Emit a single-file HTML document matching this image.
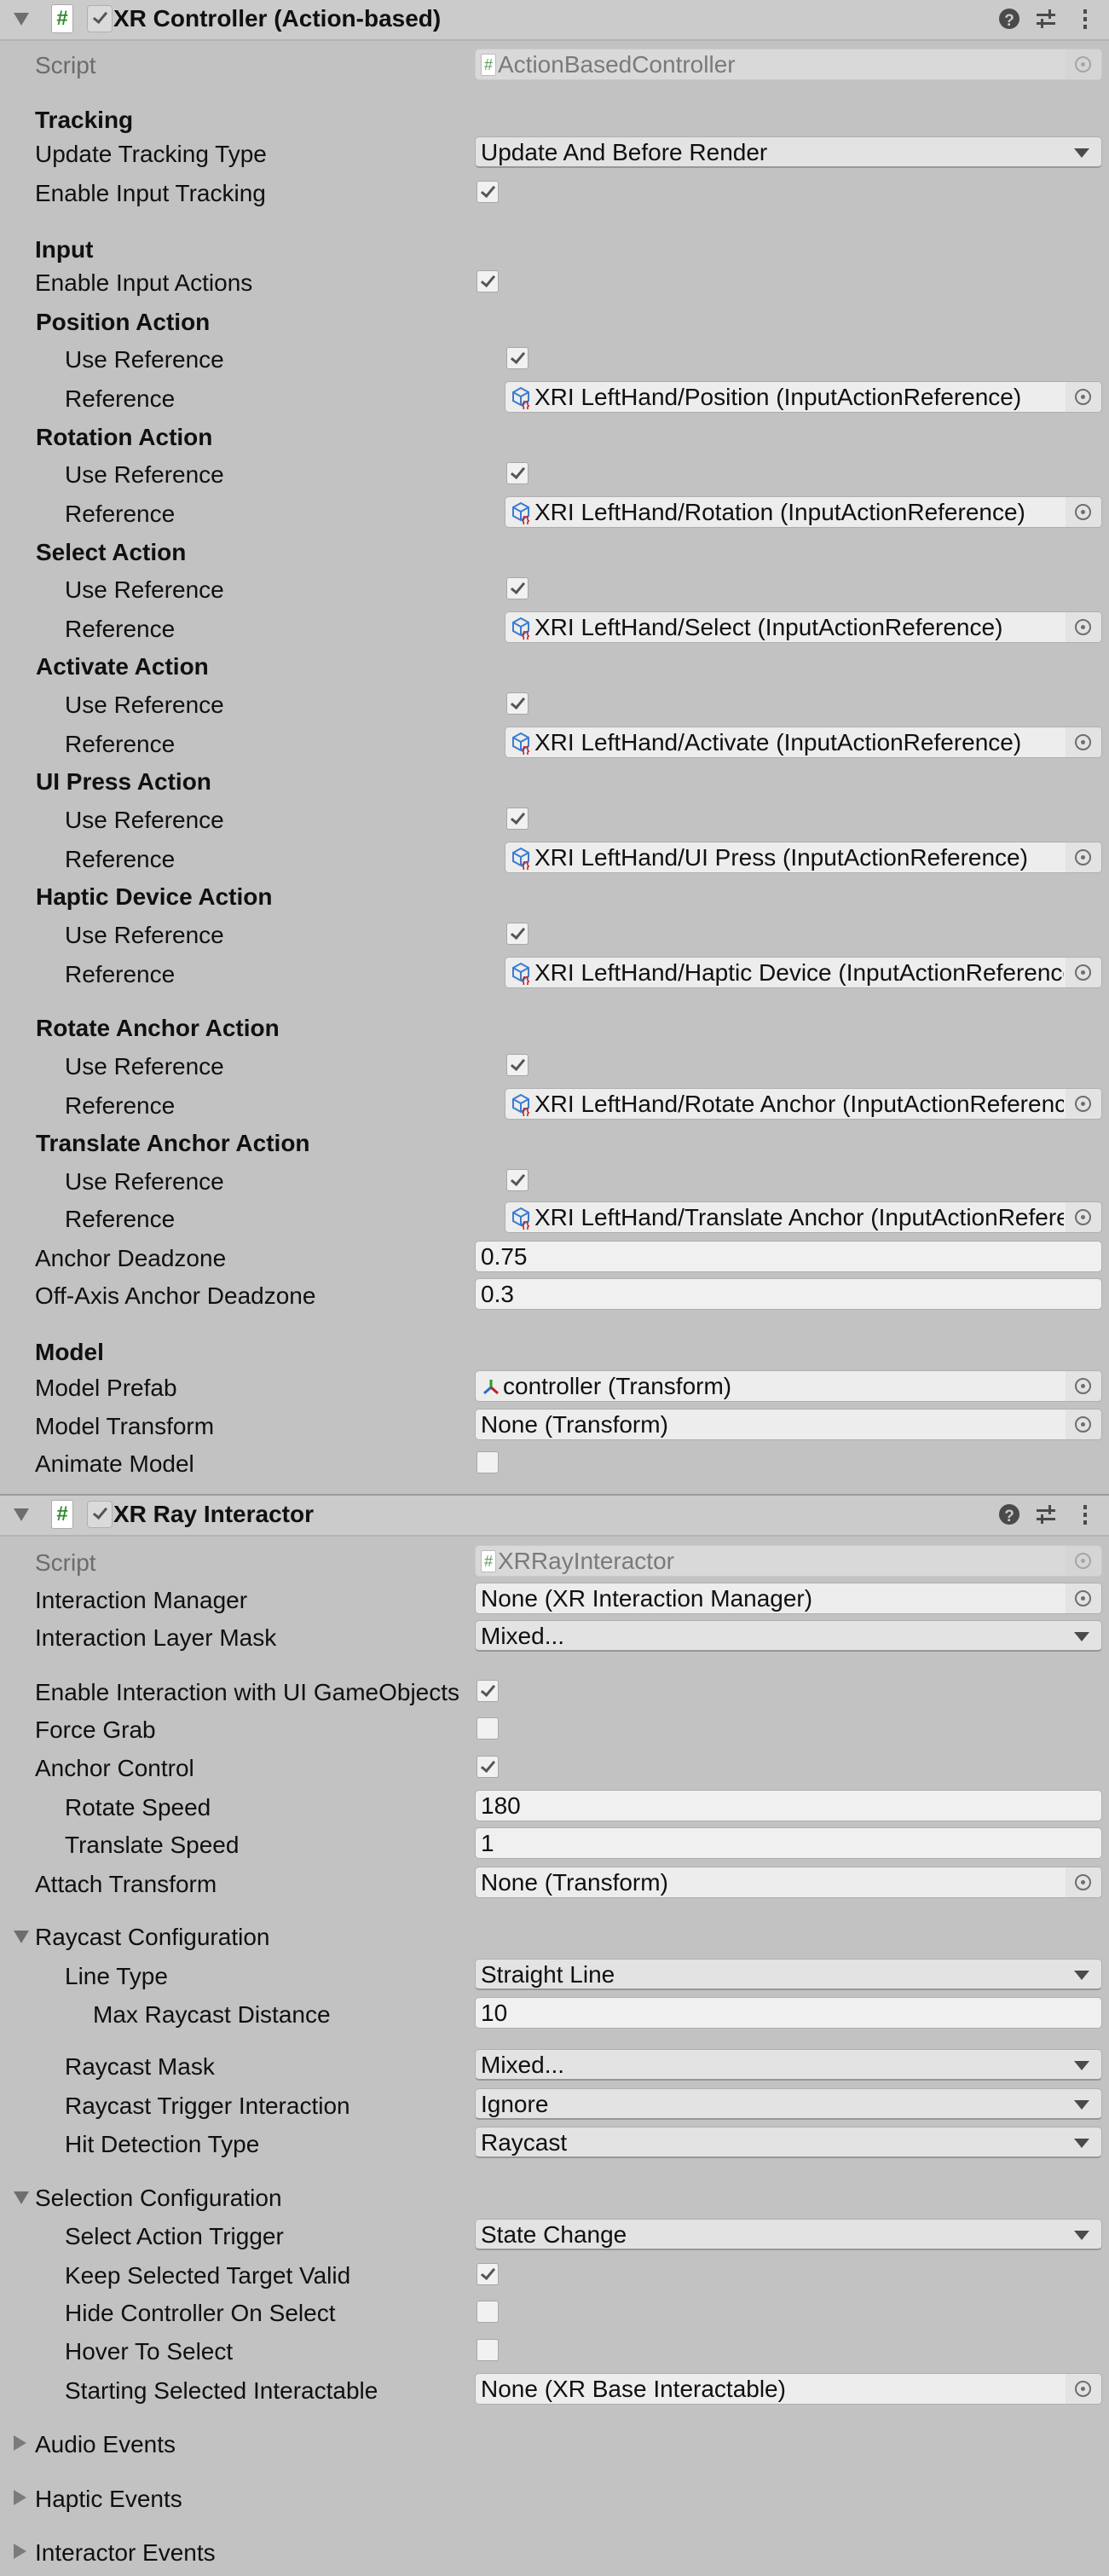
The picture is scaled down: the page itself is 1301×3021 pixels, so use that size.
<!DOCTYPE html>
<html><head><meta charset="utf-8">
<style>
html,body{margin:0;padding:0}
body{width:1301px;height:3021px;background:#c2c2c2;position:relative;overflow:hidden;font-family:"Liberation Sans",sans-serif;color:#101010}
.l{position:absolute;font-size:28px;line-height:40px;white-space:nowrap;margin-top:2px}
.b{font-weight:bold}
.g{color:#6c6c6c}
.hd{position:absolute;left:0;width:1301px;height:46px;background:#cbcbcb;border-bottom:2px solid #b3b3b3}
.f{position:absolute;left:557px;width:736px;height:37px;box-sizing:border-box;border:1px solid #afafaf;border-radius:5px;background:#ededed;font-size:28px;line-height:36px;padding-left:6px;white-space:nowrap;overflow:hidden}
.f.r{left:592px;width:701px}
.dd{background:#e3e3e3;border-bottom:2px solid #979797}
.tf{background:#f0f0f0}
.dis{background:#d9d9d9;border-color:#c9c9c9;color:#7a7a7a}
.arr{position:absolute;right:14px;top:13px;width:0;height:0;border-left:9px solid transparent;border-right:9px solid transparent;border-top:11px solid #4a4a4a}
.pk{position:absolute;right:0;top:0;width:42px;height:100%;background:#e3e3e3}
.pk:after{content:"";position:absolute;left:11px;top:8px;width:15px;height:15px;border:2px solid #6e6e6e;border-radius:50%}
.pk:before{content:"";position:absolute;left:18px;top:15px;width:5px;height:5px;background:#6e6e6e;border-radius:50%;z-index:2}
.dis .pk{background:#d5d5d5}.dis .pk:after{border-color:#a5a5a5}.dis .pk:before{background:#a5a5a5}
.txt{position:relative;z-index:1;overflow:hidden;margin-right:44px}
.c{position:absolute;left:559px;width:26px;height:26px;box-sizing:border-box;background:#f1f1f1;border:1px solid #a7a7a7;border-radius:3px}
.c.k:after{content:"";position:absolute;left:8px;top:2px;width:6px;height:13px;border-right:3px solid #555;border-bottom:3px solid #555;transform:rotate(40deg)}
.tri{position:absolute;left:16px;width:0;height:0;border-left:9px solid transparent;border-right:9px solid transparent;border-top:15px solid #6e6e6e}
.trr{position:absolute;left:16px;width:0;height:0;border-top:9px solid transparent;border-bottom:9px solid transparent;border-left:15px solid #7b7b7b}
.hash{position:absolute;width:26px;height:34px;background:#fff;border:1px solid #aaa;border-radius:3px;box-sizing:border-box;color:#2f8a2f;font-weight:bold;font-size:24px;line-height:32px;text-align:center}
.hc{position:absolute;left:102px;width:30px;height:32px;box-sizing:border-box;background:#dadada;border:1px solid #b0b0b0;border-radius:4px}
.hc:after{content:"";position:absolute;left:10px;top:4px;width:6px;height:13px;border-right:3px solid #555;border-bottom:3px solid #555;transform:rotate(40deg)}
.ti{position:absolute;left:133px;font-size:28px;font-weight:bold;line-height:40px}
.sh{display:inline-block;width:18px;height:26px;background:#fff;border:1px solid #bbb;border-radius:2px;color:#5a9a5a;font-size:18px;line-height:24px;text-align:center;vertical-align:middle;margin:-4px 2px 0 0;box-sizing:border-box}
.ic{display:inline-block;vertical-align:-5px;margin-right:2px}
</style></head><body>

<div class="hd" style="top:0"></div>
<div class="tri" style="top:15px"></div>
<div class="hash" style="left:60px;top:5px">#</div>
<div class="hc" style="top:6px"></div>
<div class="ti" style="top:2px">XR Controller (Action-based)</div>
<svg style="position:absolute;left:1170px;top:8px" width="120" height="30" viewBox="0 0 120 30">
<circle cx="14" cy="14" r="12" fill="#4a4a4a"/><text x="14" y="22" font-family="Liberation Sans" font-weight="bold" font-size="19" fill="#cbcbcb" text-anchor="middle">?</text>
<g fill="#4a4a4a"><rect x="46" y="8" width="22" height="3"/><rect x="60" y="3" width="3" height="11"/><rect x="46" y="18" width="22" height="3"/><rect x="51" y="14" width="3" height="11"/></g>
<g fill="#4a4a4a"><rect x="101" y="3" width="4" height="5"/><rect x="101" y="12" width="4" height="5"/><rect x="101" y="21" width="4" height="5"/></g>
</svg>

<div class="l g" style="left:41px;top:55px">Script</div>
<div class="f dis" style="top:57px"><div class="txt"><span class="sh">#</span>ActionBasedController</div><div class="pk"></div></div>

<div class="l b" style="left:41px;top:119px">Tracking</div>
<div class="l" style="left:41px;top:159px">Update Tracking Type</div>
<div class="f dd" style="top:160px">Update And Before Render<div class="arr"></div></div>
<div class="l" style="left:41px;top:205px">Enable Input Tracking</div>
<div class="c k" style="top:212px"></div>

<div class="l b" style="left:41px;top:271px">Input</div>
<div class="l" style="left:41px;top:310px">Enable Input Actions</div>
<div class="c k" style="top:317px"></div>

<div class="l b" style="left:42px;top:356px">Position Action</div>
<div class="l" style="left:76px;top:400px">Use Reference</div><div class="c k" style="left:594px;top:407px"></div>
<div class="l" style="left:76px;top:446px">Reference</div>
<div class="f r" style="top:447px"><div class="txt"><svg class="ic" width="26" height="28" viewBox="0 0 26 28"><path d="M12 3 L21 8 L21 18 L12 23 L3 18 L3 8 Z M3 8 L12 13 L21 8 M12 13 L12 23" fill="none" stroke="#3a7cd0" stroke-width="2"/><text x="13" y="27" font-size="12" font-family="Liberation Sans" fill="#c02020" font-weight="bold">{}</text></svg>XRI LeftHand/Position (InputActionReference)</div><div class="pk"></div></div>

<div class="l b" style="left:42px;top:491px">Rotation Action</div>
<div class="l" style="left:76px;top:535px">Use Reference</div><div class="c k" style="left:594px;top:542px"></div>
<div class="l" style="left:76px;top:581px">Reference</div>
<div class="f r" style="top:582px"><div class="txt"><svg class="ic" width="26" height="28" viewBox="0 0 26 28"><path d="M12 3 L21 8 L21 18 L12 23 L3 18 L3 8 Z M3 8 L12 13 L21 8 M12 13 L12 23" fill="none" stroke="#3a7cd0" stroke-width="2"/><text x="13" y="27" font-size="12" font-family="Liberation Sans" fill="#c02020" font-weight="bold">{}</text></svg>XRI LeftHand/Rotation (InputActionReference)</div><div class="pk"></div></div>

<div class="l b" style="left:42px;top:626px">Select Action</div>
<div class="l" style="left:76px;top:670px">Use Reference</div><div class="c k" style="left:594px;top:677px"></div>
<div class="l" style="left:76px;top:716px">Reference</div>
<div class="f r" style="top:717px"><div class="txt"><svg class="ic" width="26" height="28" viewBox="0 0 26 28"><path d="M12 3 L21 8 L21 18 L12 23 L3 18 L3 8 Z M3 8 L12 13 L21 8 M12 13 L12 23" fill="none" stroke="#3a7cd0" stroke-width="2"/><text x="13" y="27" font-size="12" font-family="Liberation Sans" fill="#c02020" font-weight="bold">{}</text></svg>XRI LeftHand/Select (InputActionReference)</div><div class="pk"></div></div>

<div class="l b" style="left:42px;top:760px">Activate Action</div>
<div class="l" style="left:76px;top:805px">Use Reference</div><div class="c k" style="left:594px;top:812px"></div>
<div class="l" style="left:76px;top:851px">Reference</div>
<div class="f r" style="top:852px"><div class="txt"><svg class="ic" width="26" height="28" viewBox="0 0 26 28"><path d="M12 3 L21 8 L21 18 L12 23 L3 18 L3 8 Z M3 8 L12 13 L21 8 M12 13 L12 23" fill="none" stroke="#3a7cd0" stroke-width="2"/><text x="13" y="27" font-size="12" font-family="Liberation Sans" fill="#c02020" font-weight="bold">{}</text></svg>XRI LeftHand/Activate (InputActionReference)</div><div class="pk"></div></div>

<div class="l b" style="left:42px;top:895px">UI Press Action</div>
<div class="l" style="left:76px;top:940px">Use Reference</div><div class="c k" style="left:594px;top:947px"></div>
<div class="l" style="left:76px;top:986px">Reference</div>
<div class="f r" style="top:987px"><div class="txt"><svg class="ic" width="26" height="28" viewBox="0 0 26 28"><path d="M12 3 L21 8 L21 18 L12 23 L3 18 L3 8 Z M3 8 L12 13 L21 8 M12 13 L12 23" fill="none" stroke="#3a7cd0" stroke-width="2"/><text x="13" y="27" font-size="12" font-family="Liberation Sans" fill="#c02020" font-weight="bold">{}</text></svg>XRI LeftHand/UI Press (InputActionReference)</div><div class="pk"></div></div>

<div class="l b" style="left:42px;top:1030px">Haptic Device Action</div>
<div class="l" style="left:76px;top:1075px">Use Reference</div><div class="c k" style="left:594px;top:1082px"></div>
<div class="l" style="left:76px;top:1121px">Reference</div>
<div class="f r" style="top:1122px"><div class="txt"><svg class="ic" width="26" height="28" viewBox="0 0 26 28"><path d="M12 3 L21 8 L21 18 L12 23 L3 18 L3 8 Z M3 8 L12 13 L21 8 M12 13 L12 23" fill="none" stroke="#3a7cd0" stroke-width="2"/><text x="13" y="27" font-size="12" font-family="Liberation Sans" fill="#c02020" font-weight="bold">{}</text></svg>XRI LeftHand/Haptic Device (InputActionReference)</div><div class="pk"></div></div>

<div class="l b" style="left:42px;top:1184px">Rotate Anchor Action</div>
<div class="l" style="left:76px;top:1229px">Use Reference</div><div class="c k" style="left:594px;top:1236px"></div>
<div class="l" style="left:76px;top:1275px">Reference</div>
<div class="f r" style="top:1276px"><div class="txt"><svg class="ic" width="26" height="28" viewBox="0 0 26 28"><path d="M12 3 L21 8 L21 18 L12 23 L3 18 L3 8 Z M3 8 L12 13 L21 8 M12 13 L12 23" fill="none" stroke="#3a7cd0" stroke-width="2"/><text x="13" y="27" font-size="12" font-family="Liberation Sans" fill="#c02020" font-weight="bold">{}</text></svg>XRI LeftHand/Rotate Anchor (InputActionReference)</div><div class="pk"></div></div>

<div class="l b" style="left:42px;top:1319px">Translate Anchor Action</div>
<div class="l" style="left:76px;top:1364px">Use Reference</div><div class="c k" style="left:594px;top:1371px"></div>
<div class="l" style="left:76px;top:1408px">Reference</div>
<div class="f r" style="top:1409px"><div class="txt"><svg class="ic" width="26" height="28" viewBox="0 0 26 28"><path d="M12 3 L21 8 L21 18 L12 23 L3 18 L3 8 Z M3 8 L12 13 L21 8 M12 13 L12 23" fill="none" stroke="#3a7cd0" stroke-width="2"/><text x="13" y="27" font-size="12" font-family="Liberation Sans" fill="#c02020" font-weight="bold">{}</text></svg>XRI LeftHand/Translate Anchor (InputActionReference)</div><div class="pk"></div></div>

<div class="l" style="left:41px;top:1454px">Anchor Deadzone</div>
<div class="f tf" style="top:1455px">0.75</div>
<div class="l" style="left:41px;top:1498px">Off-Axis Anchor Deadzone</div>
<div class="f tf" style="top:1499px">0.3</div>

<div class="l b" style="left:41px;top:1564px">Model</div>
<div class="l" style="left:41px;top:1606px">Model Prefab</div>
<div class="f" style="top:1607px"><div class="txt"><svg class="ic" width="24" height="26" viewBox="0 0 24 26"><path d="M12 4 L12 13" stroke="#2a9a2a" stroke-width="3"/><path d="M12 13 L4 20" stroke="#2a6ad0" stroke-width="3"/><path d="M12 13 L20 20" stroke="#c02020" stroke-width="3"/></svg>controller (Transform)</div><div class="pk"></div></div>
<div class="l" style="left:41px;top:1651px">Model Transform</div>
<div class="f" style="top:1652px"><div class="txt">None (Transform)</div><div class="pk"></div></div>
<div class="l" style="left:41px;top:1695px">Animate Model</div>
<div class="c" style="top:1702px"></div>

<div class="hd" style="top:1752px;border-top:2px solid #9a9a9a"></div>
<div class="tri" style="top:1769px"></div>
<div class="hash" style="left:60px;top:1759px">#</div>
<div class="hc" style="top:1760px"></div>
<div class="ti" style="top:1756px">XR Ray Interactor</div>
<svg style="position:absolute;left:1170px;top:1762px" width="120" height="30" viewBox="0 0 120 30">
<circle cx="14" cy="14" r="12" fill="#4a4a4a"/><text x="14" y="22" font-family="Liberation Sans" font-weight="bold" font-size="19" fill="#cbcbcb" text-anchor="middle">?</text>
<g fill="#4a4a4a"><rect x="46" y="8" width="22" height="3"/><rect x="60" y="3" width="3" height="11"/><rect x="46" y="18" width="22" height="3"/><rect x="51" y="14" width="3" height="11"/></g>
<g fill="#4a4a4a"><rect x="101" y="3" width="4" height="5"/><rect x="101" y="12" width="4" height="5"/><rect x="101" y="21" width="4" height="5"/></g>
</svg>

<div class="l g" style="left:41px;top:1811px">Script</div>
<div class="f dis" style="top:1812px"><div class="txt"><span class="sh">#</span>XRRayInteractor</div><div class="pk"></div></div>
<div class="l" style="left:41px;top:1855px">Interaction Manager</div>
<div class="f" style="top:1856px"><div class="txt">None (XR Interaction Manager)</div><div class="pk"></div></div>
<div class="l" style="left:41px;top:1899px">Interaction Layer Mask</div>
<div class="f dd" style="top:1900px">Mixed...<div class="arr"></div></div>

<div class="l" style="left:41px;top:1963px">Enable Interaction with UI GameObjects</div>
<div class="c k" style="top:1970px"></div>
<div class="l" style="left:41px;top:2007px">Force Grab</div>
<div class="c" style="top:2014px"></div>
<div class="l" style="left:41px;top:2052px">Anchor Control</div>
<div class="c k" style="top:2059px"></div>
<div class="l" style="left:76px;top:2098px">Rotate Speed</div>
<div class="f tf" style="top:2099px">180</div>
<div class="l" style="left:76px;top:2142px">Translate Speed</div>
<div class="f tf" style="top:2143px">1</div>
<div class="l" style="left:41px;top:2188px">Attach Transform</div>
<div class="f" style="top:2189px"><div class="txt">None (Transform)</div><div class="pk"></div></div>

<div class="tri" style="top:2264px"></div>
<div class="l" style="left:41px;top:2250px">Raycast Configuration</div>
<div class="l" style="left:76px;top:2296px">Line Type</div>
<div class="f dd" style="top:2297px">Straight Line<div class="arr"></div></div>
<div class="l" style="left:109px;top:2341px">Max Raycast Distance</div>
<div class="f tf" style="top:2342px">10</div>
<div class="l" style="left:76px;top:2402px">Raycast Mask</div>
<div class="f dd" style="top:2403px">Mixed...<div class="arr"></div></div>
<div class="l" style="left:76px;top:2448px">Raycast Trigger Interaction</div>
<div class="f dd" style="top:2449px">Ignore<div class="arr"></div></div>
<div class="l" style="left:76px;top:2493px">Hit Detection Type</div>
<div class="f dd" style="top:2494px">Raycast<div class="arr"></div></div>

<div class="tri" style="top:2570px"></div>
<div class="l" style="left:41px;top:2556px">Selection Configuration</div>
<div class="l" style="left:76px;top:2601px">Select Action Trigger</div>
<div class="f dd" style="top:2602px">State Change<div class="arr"></div></div>
<div class="l" style="left:76px;top:2647px">Keep Selected Target Valid</div>
<div class="c k" style="top:2654px"></div>
<div class="l" style="left:76px;top:2691px">Hide Controller On Select</div>
<div class="c" style="top:2698px"></div>
<div class="l" style="left:76px;top:2736px">Hover To Select</div>
<div class="c" style="top:2743px"></div>
<div class="l" style="left:76px;top:2782px">Starting Selected Interactable</div>
<div class="f" style="top:2783px"><div class="txt">None (XR Base Interactable)</div><div class="pk"></div></div>

<div class="trr" style="top:2856px"></div>
<div class="l" style="left:41px;top:2845px">Audio Events</div>
<div class="trr" style="top:2920px"></div>
<div class="l" style="left:41px;top:2909px">Haptic Events</div>
<div class="trr" style="top:2983px"></div>
<div class="l" style="left:41px;top:2972px">Interactor Events</div>

</body></html>
